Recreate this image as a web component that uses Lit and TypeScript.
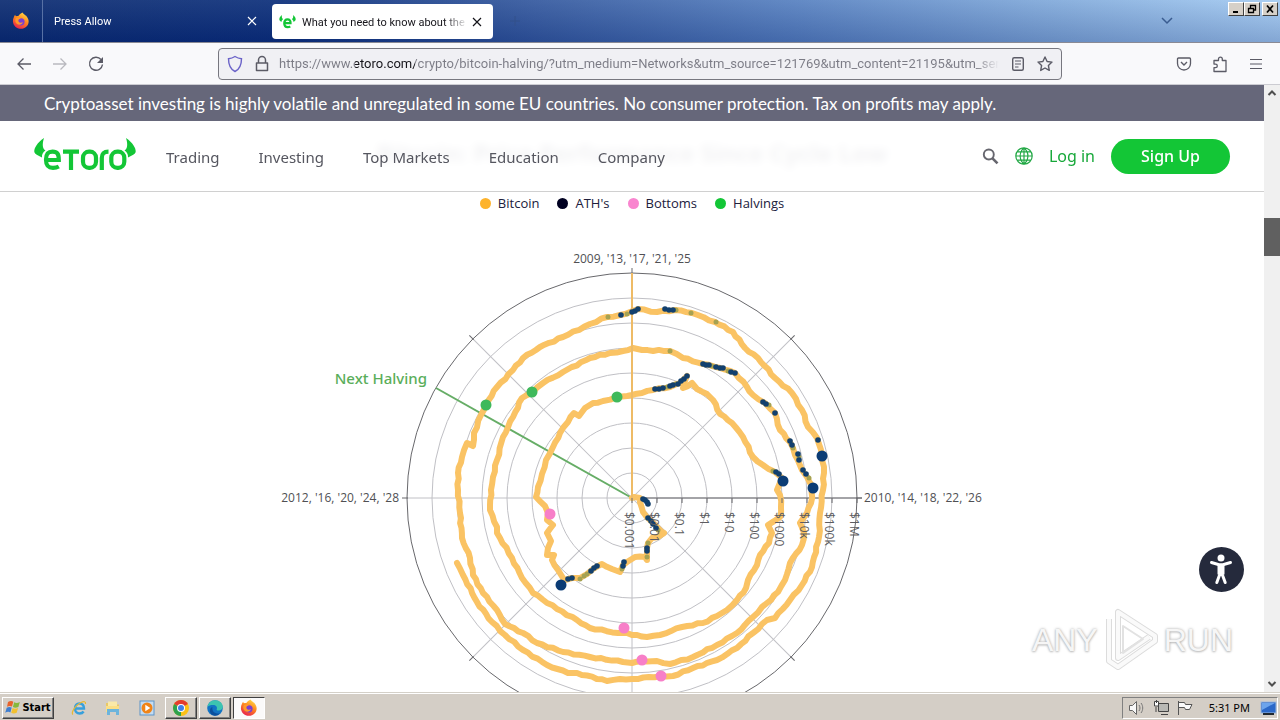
import { css, html, LitElement, svg } from 'lit';
import { customElement, property } from 'lit/decorators.js';

type Point = [number, number];

const CENTER: Point = [350, 250];
const RING_STEP = 25;
const PRICES = ['$0.001', '$0.01', '$0.1', '$1', '$10', '$100', '$1000', '$10k', '$100k', '$1M'];

// price line, from the centre outwards, one turn every four years
const PRICE_LINE = `
350,250 352,249 358,250 358,254 361,264 368,272 373,277 380,284 382,285 376,289 370,290 366,295 365,300 365,305
365,312 363,309 353,309 345,314 341,317 338,324 330,321 320,316 311,321 305,326 298,330 290,330 283,332 281,330
276,322 270,312 272,307 265,307 266,300 269,293 265,285 271,277 265,272 266,265 263,258 254,249 256,239 260,226
264,212 271,199 278,185 286,174 292,165 297,168 303,160 311,155 321,153 335,149 350,147 360,145 371,142 388,139
398,135 405,128 401,140 410,135 415,141 425,146 431,152 438,166 450,175 461,189 471,209 481,217 493,224 500,230
495,242 498,247 499,259 498,269 486,277 490,285 487,295 478,307 475,317 466,332 464,340 455,352 445,362 435,368
421,375 400,379 378,387 365,389 350,387 345,385 336,385 308,380 295,372 275,361 251,345 240,330 230,310 215,285
215,279 208,262 209,242 211,229 215,212 221,189 231,169 240,150 250,145 261,135 281,124 308,110 328,105 341,103
351,100 360,102 388,103 401,110 421,116 438,120 453,125 465,139 471,147 483,155 493,165 498,182 508,194 513,207
520,222 525,229 531,239 529,255 525,265 518,275 522,285 520,297 508,315 503,332 496,344 485,355 471,369 455,385
435,397 411,409 388,416 375,413 360,413 350,415 341,414 308,409 281,404 255,395 241,385 223,376 215,362 201,345
191,327 188,310 180,290 178,265 176,242 176,225 180,209 185,195 191,198 192,185 199,167 204,156 215,139 231,122
241,110 258,99 281,89 308,76 325,69 338,67 348,64 356,61 375,64 393,62 410,65 433,74 451,84 463,100 476,110
493,130 510,145 520,162 526,179 535,190 540,207 542,225 541,242 538,265 537,289 530,319 520,337 508,352 493,370
485,372 471,385 455,400 435,412 411,420 391,428 378,428 350,431 338,431 325,433 295,425 286,425 265,417 241,402
223,387 210,374 195,354 181,327 175,315`;

const HIGHS: Point[] = [
  [339, 67], [350, 64], [353, 63], [356, 61], [383, 61], [387, 62], [391, 62], [421, 116], [424, 117], [427, 117],
  [434, 119], [438, 120], [441, 120], [449, 124], [453, 125], [481, 154], [484, 156], [493, 165], [508, 193],
  [510, 197], [516, 206], [517, 212], [521, 222], [524, 226], [373, 141], [377, 141], [381, 140], [388, 138],
  [391, 137], [396, 136], [399, 133], [402, 131], [405, 128], [494, 224], [497, 226], [361, 251], [363, 252],
  [365, 254], [366, 256], [366, 270], [369, 273], [371, 276], [374, 280], [365, 300], [365, 303], [341, 318],
  [342, 314], [315, 318], [312, 320], [309, 323], [290, 330], [286, 331], [536, 192],
];

const MINOR_HIGHS: Point[] = [
  [326, 69], [345, 66], [394, 62], [409, 65], [434, 74], [388, 103], [430, 118], [446, 123], [487, 157], [511, 200],
  [517, 209], [527, 230], [385, 139], [394, 136], [491, 223], [376, 282], [366, 295], [365, 309], [340, 321],
  [305, 326], [302, 328], [298, 331],
];

const MARKERS = [
  { kind: 'halving', points: [[335, 149], [250, 144], [204, 157]] as Point[] },
  { kind: 'high', points: [[540, 208], [531, 240], [501, 233], [279, 337]] as Point[] },
  { kind: 'bottom', points: [[268, 266], [342, 380], [360, 412], [379, 428]] as Point[] },
];

const LEGEND = [
  { label: 'Bitcoin', kind: 'bitcoin' },
  { label: "ATH's", kind: 'ath' },
  { label: 'Bottoms', kind: 'bottoms' },
  { label: 'Halvings', kind: 'halvings' },
];

function roughen(source: string) {
  const points = source.trim().split(/\s+/).map((pair) => pair.split(',').map(Number));
  const result: string[] = [];
  points.forEach(([x, y], index) => {
    result.push(`${x},${y}`);
    const next = points[index + 1];
    if (!next) return;
    const length = Math.hypot(next[0] - x, next[1] - y);
    const steps = Math.floor(length / 5);
    for (let i = 1; i < steps; i++) {
      const t = i / steps;
      const shift = Math.sin(index * 7 + i * 4) * 0.7;
      const px = x + (next[0] - x) * t - ((next[1] - y) / length) * shift;
      const py = y + (next[1] - y) * t + ((next[0] - x) / length) * shift;
      result.push(`${px.toFixed(1)},${py.toFixed(1)}`);
    }
  });
  return result.join(' ');
}

const firefoxIcon = html`
  <svg width="18" height="18" viewBox="0 0 18 18" aria-hidden="true">
    <defs>
      <linearGradient id="fx" x1="0.8" y1="0" x2="0.3" y2="1">
        <stop offset="0" stop-color="#ffe14a" />
        <stop offset="0.45" stop-color="#ff8a1e" />
        <stop offset="1" stop-color="#e8204e" />
      </linearGradient>
    </defs>
    <path fill="url(#fx)" d="M10.500.5c1 1.400 2 2 3 3 .5-.1.800.200 1.200.900 2.500 3 2.800 7-.2 10.200-3.200 3.200-8.500 2.900-11.400-.2C.5 11.700.3 8 2 4.800c.2-.8.6-1.500 1.200-2 .1.700.4 1.200.8 1.500.8-.3 1.500-.4 2.300-.3C7.200 2.500 8.800 1.600 10.500.5z" />
    <circle cx="9" cy="9.800" r="3.600" fill="#7a3fd0" />
    <path fill="#ff9a28" d="M4 6c1.800-1 3.500-.6 4.900.6-1.800.2-2.600 1-2.500 2.300.4 1.700 2.500 2.300 4.600 1.300-.8 2.200-3.800 3.300-6.200 1.600C2.900 10.300 2.900 7.500 4 6z" />
  </svg>
`;

const closeIcon = html`
  <svg width="10" height="10" viewBox="0 0 10 10" aria-hidden="true">
    <path d="M1 1l8 8M9 1l-8 8" fill="none" stroke="currentColor" stroke-width="1.200" />
  </svg>
`;

@customElement('cycle-chart')
export class CycleChart extends LitElement {
  static styles = css`
    :host {
      display: block;
      width: 700px;
      max-width: 100%;
    }

    svg {
      display: block;
      width: 100%;
      overflow: visible;
      font-family: 'Open Sans', 'Noto Sans', sans-serif;
    }

    .ring,
    .spoke {
      fill: none;
      stroke: #c0c0c5;
      stroke-width: 1px;
    }

    .outline,
    .axis {
      fill: none;
      stroke: #68686c;
      stroke-width: 1px;
    }

    .price {
      fill: none;
      stroke: #fac364;
      stroke-width: 6px;
      stroke-linejoin: round;
      stroke-linecap: round;
    }

    .start {
      stroke: #eebb66;
      stroke-width: 2px;
    }

    .next {
      stroke: #66ad66;
      stroke-width: 2px;
    }

    .dot {
      fill: #12406e;
    }

    .dot--minor {
      fill: #a6a252;
    }

    .marker--halving {
      fill: #3fb95b;
    }

    .marker--high {
      fill: #0b3c75;
    }

    .marker--bottom {
      fill: #f77fc8;
    }

    .label {
      fill: #505054;
      font-size: 12px;
    }

    .label--price {
      fill: #5c5c60;
    }

    .label--next {
      fill: #5aae5a;
      font-family: 'Noto Sans', sans-serif;
      font-size: 15px;
      font-weight: 500;
    }
  `;

  private renderSpoke(angle: number) {
    return svg`
      <g transform="rotate(${angle} ${CENTER[0]} ${CENTER[1]})">
        <line class="spoke" x1="350" y1="250" x2="350" y2="25" />
        <line class="axis" x1="350" y1="26" x2="350" y2="20" />
      </g>
    `;
  }

  private renderPrice(label: string, index: number) {
    const x = CENTER[0] + index * RING_STEP;
    return svg`
      <line class="axis" x1=${x} y1="250" x2=${x} y2="255" />
      <text class="label label--price" transform="translate(${x - 7} 264) rotate(90)">${label}</text>
    `;
  }

  protected render() {
    return html`
      <svg viewBox="0 0 700 500" role="img" aria-label="Bitcoin price by cycle">
        ${PRICES.slice(1, -1).map((_, i) => svg`<circle class="ring" cx="350" cy="250" r=${(i + 1) * RING_STEP} />`)}
        ${[0, 45, 90, 135, 180, 225, 270, 315].map((angle) => this.renderSpoke(angle))}
        <circle class="outline" cx="350" cy="250" r="225" />
        <line class="axis" x1="350" y1="250" x2="580" y2="250" />
        <line class="next" x1="350" y1="250" x2="154" y2="140" />
        <polyline class="price" points=${roughen(PRICE_LINE)} />
        <line class="start" x1="350" y1="250" x2="350" y2="25" />
        ${MINOR_HIGHS.map(([x, y]) => svg`<circle class="dot dot--minor" cx=${x} cy=${y} r="2.500" />`)}
        ${HIGHS.map(([x, y]) => svg`<circle class="dot" cx=${x} cy=${y} r="2.800" />`)}
        ${PRICES.map((label, i) => this.renderPrice(label, i))}
        ${MARKERS.map(({ kind, points }) =>
          points.map(([x, y]) => svg`<circle class="marker--${kind}" cx=${x} cy=${y} r="5.500" />`)
        )}
        <text class="label" x="350" y="15" text-anchor="middle">2009, '13, '17, '21, '25</text>
        <text class="label" x="117" y="254" text-anchor="end">2012, '16, '20, '24, '28</text>
        <text class="label" x="582" y="254">2010, '14, '18, '22, '26</text>
        <text class="label label--next" x="145" y="136" text-anchor="end">Next Halving</text>
      </svg>
    `;
  }
}

@customElement('browser-tab')
export class BrowserTab extends LitElement {
  static styles = css`
    :host {
      display: flex;
      align-items: center;
      box-sizing: border-box;
      width: 225px;
      padding: 0 7px 0 11px;
      color: #fff;
      font-family: Roboto, 'Noto Sans', sans-serif;
    }

    :host([active]) {
      width: 221px;
      margin: 4px 0 3px 4px;
      padding: 0 7px;
      border-radius: 4px;
      background: #fff;
      color: #15141a;
    }

    button {
      padding: 0;
      border: 0;
      background: none;
      color: inherit;
      font: inherit;
      font-size: 11px;
      line-height: 16px;
    }

    .title {
      flex: 1;
      min-width: 0;
      overflow: hidden;
      padding-top: 2px;
      text-align: left;
      white-space: nowrap;
      -webkit-mask-image: linear-gradient(to left, transparent, #000 24px);
    }

    .close {
      display: flex;
      padding: 4px;
    }

    .icon {
      display: flex;
      margin-right: 6px;
    }
  `;

  @property()
  public name: string = '';

  @property({ type: Boolean, reflect: true })
  public active: boolean = false;

  protected render() {
    return html`
      ${this.active
        ? html`
            <span class="icon">
              <svg width="17" height="16" viewBox="0 0 17 16" aria-hidden="true">
                <path fill="#13c636" d="M3 1C.8 2.400-.3 5 .7 6.600c.5.700 1 1 1.700 1.400C2.600 6 4 5.500 4 5 2.800 4.300 2.600 2.600 3 1zM14 1c2.200 1.400 3.300 4 2.300 5.600-.5.700-1 1-1.700 1.400C14.400 6 13 5.500 13 5c1.200-.7 1.400-2.400 1-4z" />
                <path fill="none" stroke="#13c636" stroke-width="2.300" d="M5.300 9.200h6.200c.2-2.400-1-3.800-3-3.800-2.100 0-3.200 1.500-3.200 3.900 0 2.600 1.200 3.900 3.300 3.900 1.200 0 2-.3 2.600-.8" />
              </svg>
            </span>
          `
        : ''}
      <button class="title">${this.name}</button>
      <button class="close" aria-label="Close tab">${closeIcon}</button>
    `;
  }
}

@customElement('app-root')
export default class AppRoot extends LitElement {
  static styles = css`
    :host {
      display: flex;
      flex-direction: column;
      height: 100vh;
      overflow: hidden;
      background: #fff;
      font-family: 'Noto Sans', sans-serif;
    }

    button {
      padding: 0;
      border: 0;
      background: none;
      color: inherit;
      font: inherit;
    }

    a {
      color: inherit;
      text-decoration: none;
    }

    svg {
      display: block;
      flex: none;
    }

    .tabs {
      display: flex;
      flex: none;
      height: 43px;
      background:
        linear-gradient(to bottom, rgba(255, 255, 255, 0.08), rgba(0, 20, 90, 0.2)),
        linear-gradient(to right, #0a2a70, #0b2e7a 22%, #34599f 42%, #5680c0 62%, #80a9da 82%, #a4cbf2);
      border-bottom: 1px solid #8a8a94;
      box-sizing: border-box;
    }

    .tabs__view {
      display: flex;
      align-items: center;
      padding: 0 12px;
      border-right: 1px solid #5871a5;
    }

    .tabs__new {
      display: flex;
      align-items: center;
      margin-left: 16px;
      color: #33518a;
    }

    .tabs__list {
      margin-left: auto;
      padding: 0 54px;
      color: #3a5c90;
    }

    .window {
      display: flex;
      align-self: flex-start;
      padding: 2px 2px 0 0;
    }

    .window__button {
      display: flex;
      align-items: center;
      justify-content: center;
      width: 16px;
      height: 14px;
      box-sizing: border-box;
      background: #d6d0c8;
      border: 1px solid;
      border-color: #fff #404040 #404040 #fff;
      color: #000;
    }

    .window__button:last-child {
      margin-left: 2px;
    }

    .toolbar {
      display: flex;
      align-items: center;
      flex: none;
      height: 42px;
      box-sizing: border-box;
      padding: 0 16px;
      border-bottom: 1px solid #ccccd2;
      background: #f9f9fb;
      color: #5b5b66;
    }

    .toolbar__nav,
    .toolbar__menu {
      display: flex;
      align-items: center;
      flex: 1;
      gap: 20px;
    }

    .toolbar__nav button:nth-child(2) {
      opacity: 0.4;
    }

    .toolbar__menu {
      justify-content: flex-end;
    }

    .address {
      display: flex;
      align-items: center;
      flex: 0 1 844px;
      gap: 12px;
      box-sizing: border-box;
      height: 32px;
      padding: 0 8px;
      border: 1px solid #77777f;
      border-radius: 4px;
      background: #f0f0f4;
    }

    .address__input {
      flex: 1;
      min-width: 0;
      margin-left: -2px;
      padding: 0;
      border: 0;
      outline: none;
      background: linear-gradient(
        to right,
        #7b7b85 76px,
        #15141a 76px,
        #15141a 136px,
        #7b7b85 136px,
        #7b7b85 calc(100% - 24px),
        transparent
      );
      -webkit-background-clip: text;
      background-clip: text;
      color: transparent;
      font-family: Roboto, 'Noto Sans', sans-serif;
      font-size: 13px;
      line-height: 20px;
    }

    .content {
      display: flex;
      flex: 1;
      min-height: 0;
    }

    .page {
      position: relative;
      flex: 1;
      min-width: 0;
      overflow: hidden;
      background: #fff;
    }

    .page__top {
      position: absolute;
      top: 0;
      left: 0;
      right: 0;
    }

    .risk {
      margin: 0;
      padding: 2px 44px 0;
      background: #66677a;
      color: #fff;
      font-family: Lato, sans-serif;
      font-size: 17px;
      line-height: 34px;
      white-space: nowrap;
    }

    .header {
      display: flex;
      align-items: center;
      height: 70px;
      padding: 0 34px;
      border-bottom: 1px solid #d0d0d0;
      background: rgba(255, 255, 255, 0.95);
      backdrop-filter: blur(4px);
    }

    .header__links {
      display: flex;
      flex: 1;
      gap: 39px;
      margin-left: 30px;
      padding-top: 2px;
      color: #55565f;
      font-size: 15px;
      line-height: 20px;
    }

    .header__actions {
      display: flex;
      align-items: center;
      gap: 16px;
      color: #17a83a;
      font-size: 16px;
      line-height: 20px;
    }

    .header__signup {
      width: 119px;
      height: 35px;
      border-radius: 18px;
      background: #13c636;
      color: #fff;
      font-weight: 500;
    }

    .article {
      display: flex;
      flex-direction: column;
      align-items: center;
      padding-top: 52px;
    }

    .article__title {
      margin: 0;
      color: #000021;
      font-size: 24px;
      font-weight: 700;
      line-height: 32px;
    }

    .legend {
      display: flex;
      gap: 18px;
      margin: 24px 0 35px;
      padding: 0;
      list-style: none;
      color: #20203c;
      font-family: 'Open Sans', sans-serif;
      font-size: 13px;
      line-height: 20px;
    }

    .legend__item {
      display: flex;
      align-items: center;
      gap: 7px;
    }

    .legend__item::before {
      content: '';
      width: 11px;
      height: 11px;
      border-radius: 50%;
      background: var(--dot);
    }

    .legend__item--bitcoin {
      --dot: #fdb32c;
    }

    .legend__item--ath {
      --dot: #000021;
    }

    .legend__item--bottoms {
      --dot: #f985cf;
    }

    .legend__item--halvings {
      --dot: #13c636;
    }

    .access {
      position: absolute;
      right: 20px;
      bottom: 100px;
      border-radius: 50%;
    }

    .watermark {
      position: absolute;
      right: 31px;
      bottom: 16px;
      display: flex;
      align-items: center;
      gap: 4px;
      color: #f6f6f6;
      font-family: 'Liberation Sans Narrow', 'Liberation Sans', sans-serif;
      font-size: 32px;
      line-height: 72px;
      text-shadow: 0 0 3px #a8a8a8, 0 1px 2px #cfcfcf;
    }

    .scrollbar {
      display: flex;
      flex-direction: column;
      align-items: center;
      width: 16px;
      background: #f0f0f0;
      color: #505050;
    }

    .scrollbar__button {
      display: flex;
      align-items: center;
      justify-content: center;
      height: 16px;
    }

    .scrollbar__track {
      display: flex;
      flex-direction: column;
      flex: 1;
      align-self: stretch;
    }

    .scrollbar__track::before {
      content: '';
      flex: 117 0 0;
    }

    .scrollbar__track::after {
      content: '';
      flex: 420 0 0;
    }

    .scrollbar__thumb {
      height: 38px;
      background: #606060;
    }

    .taskbar {
      display: flex;
      align-items: center;
      flex: none;
      height: 28px;
      box-sizing: border-box;
      padding: 3px 2px 1px;
      border-top: 1px solid #d4d0c8;
      box-shadow: inset 0 1px #fff;
      background: #d4cec6;
      color: #000;
      font-size: 11px;
    }

    .taskbar__start,
    .taskbar__app {
      display: flex;
      align-items: center;
      justify-content: center;
      box-sizing: border-box;
      height: 22px;
      border: 1px solid;
      border-color: #fff #404040 #404040 #fff;
      box-shadow: inset -1px -1px #808080;
    }

    .taskbar__start {
      gap: 1px;
      width: 52px;
      font-family: 'DejaVu Sans Condensed', 'DejaVu Sans', sans-serif;
      font-weight: 700;
    }

    .taskbar__quick {
      display: flex;
      gap: 18px;
      padding: 0 10px 0 17px;
    }

    .taskbar__app {
      width: 32px;
      margin-right: 2px;
    }

    .taskbar__app--active {
      border-color: #404040 #fff #fff #404040;
      box-shadow: none;
      background: #fbfafa;
    }

    .tray {
      display: flex;
      align-items: center;
      gap: 7px;
      height: 22px;
      margin-left: auto;
      padding: 0 0 0 5px;
      border: 1px solid;
      border-color: #808080 #fff #fff #808080;
      box-sizing: border-box;
    }

    .tray__time {
      margin: 0 3px 0 9px;
    }
  `;

  private renderTabs() {
    return html`
      <div class="tabs">
        <button class="tabs__view" aria-label="Firefox">${firefoxIcon}</button>
        <browser-tab name="Press Allow"></browser-tab>
        <browser-tab name="What you need to know about the" active></browser-tab>
        <button class="tabs__new" aria-label="New tab">
          <svg width="12" height="12" viewBox="0 0 12 12"><path d="M6 1v10M1 6h10" stroke="currentColor" /></svg>
        </button>
        <button class="tabs__list" aria-label="List all tabs">
          <svg width="14" height="14" viewBox="0 0 14 14"><path d="M2 4l5 5 5-5" fill="none" stroke="currentColor" stroke-width="1.500" /></svg>
        </button>
        <div class="window">
          <button class="window__button" aria-label="Minimize">
            <svg width="10" height="10" viewBox="0 0 10 10"><path d="M2 8h5" stroke="currentColor" stroke-width="2" /></svg>
          </button>
          <button class="window__button" aria-label="Restore">
            <svg width="10" height="10" viewBox="0 0 10 10"><path d="M3.500 4V1.500h5V6H6.500M3 1.500h6M1.500 4.500h5v4h-5zM1 4.500h6" fill="none" stroke="currentColor" stroke-width="1.300" /></svg>
          </button>
          <button class="window__button" aria-label="Close">
            <svg width="10" height="10" viewBox="0 0 10 10"><path d="M2 1.500l6 7M8 1.500l-6 7" stroke="currentColor" stroke-width="1.700" /></svg>
          </button>
        </div>
      </div>
    `;
  }

  private renderToolbar() {
    return html`
      <div class="toolbar">
        <div class="toolbar__nav">
          <button aria-label="Back">
            <svg width="16" height="16" viewBox="0 0 16 16"><path d="M15 8H2M7.500 2.500L2 8l5.500 5.500" fill="none" stroke="currentColor" stroke-width="1.300" /></svg>
          </button>
          <button aria-label="Forward">
            <svg width="16" height="16" viewBox="0 0 16 16"><path d="M1 8h13M8.500 2.500L14 8l-5.500 5.500" fill="none" stroke="currentColor" stroke-width="1.300" /></svg>
          </button>
          <button aria-label="Reload">
            <svg width="16" height="16" viewBox="0 0 16 16"><path d="M13 3.500A6.500 6.500 0 1 0 14.500 8.500" fill="none" stroke="currentColor" stroke-width="1.400" /><path d="M15 1v6H9z" fill="currentColor" /></svg>
          </button>
        </div>
        <div class="address">
          <svg width="16" height="18" viewBox="0 0 16 18"><path d="M8 1.500c2.200 1.400 4.300 2 6.500 2.200 0 5.800-1.500 10.300-6.500 12.800C3 14 1.500 9.500 1.500 3.700 3.700 3.500 5.800 2.900 8 1.500z" fill="none" stroke="#6a62c8" stroke-width="1.400" /></svg>
          <svg width="14" height="18" viewBox="0 0 14 18"><path d="M3.500 8V5a3.500 3.500 0 0 1 7 0v3M1.500 8h11v7.500h-11z" fill="none" stroke="currentColor" stroke-width="1.500" stroke-linejoin="round" /></svg>
          <input
            class="address__input"
            aria-label="Address"
            value="https://www.etoro.com/crypto/bitcoin-halving/?utm_medium=Networks&utm_source=121769&utm_content=21195&utm_serial=210"
          />
          <svg width="14" height="16" viewBox="0 0 14 16"><rect x="1.700" y="1.700" width="10.600" height="12.600" rx="1.500" fill="none" stroke="currentColor" stroke-width="1.400" /><path d="M4 5h6M4 8h6M4 11h3.500" stroke="currentColor" stroke-width="1.200" /></svg>
          <svg width="16" height="16" viewBox="0 0 16 16"><path d="M8 1l2.100 4.500 4.900.6-3.600 3.400.9 4.900L8 12l-4.300 2.400.9-4.900L1 6.100l4.900-.6z" fill="none" stroke="currentColor" stroke-width="1.400" stroke-linejoin="round" /></svg>
        </div>
        <div class="toolbar__menu">
          <button aria-label="Save to Pocket">
            <svg width="16" height="16" viewBox="0 0 16 16"><path d="M2.500 2h11a1 1 0 0 1 1 1v4.500a6.500 6.500 0 0 1-13 0V3a1 1 0 0 1 1-1z" fill="none" stroke="currentColor" stroke-width="1.300" /><path d="M5 6l3 3 3-3" fill="none" stroke="currentColor" stroke-width="1.400" /></svg>
          </button>
          <button aria-label="Extensions">
            <svg width="16" height="18" viewBox="0 0 16 18"><path d="M2 5.500h4.500V4a1.900 1.900 0 0 1 3.800 0v1.500H14v11H2v-3.800h1.500a1.800 1.800 0 0 0 0-3.600H2z" fill="none" stroke="currentColor" stroke-width="1.300" stroke-linejoin="round" /></svg>
          </button>
          <button aria-label="Menu">
            <svg width="16" height="16" viewBox="0 0 16 16"><path d="M2 3.500h12M2 8h12M2 12.500h12" stroke="currentColor" stroke-width="1.200" /></svg>
          </button>
        </div>
      </div>
    `;
  }

  private renderHeader() {
    return html`
      <div class="page__top">
        <p class="risk">
          Cryptoasset investing is highly volatile and unregulated in some EU countries. No consumer protection. Tax on
          profits may apply.
        </p>
        <header class="header">
          <a href="#" aria-label="eToro">
            <svg width="102" height="36" viewBox="0 0 102 36">
              <path fill="#13c636" d="M10 0C3 5 0 10 .3 14c.5 2 3.500 3.500 7.700 5.500-.3-3 1-5.500 3.500-7C8.500 11 8 6 10 0zM92 0c7 5 10 10 9.700 14-.5 2-3.500 3.500-7.700 5.500.3-3-1-5.500-3.500-7C93.500 11 94 6 92 0z" />
              <g fill="none" stroke="#13c636" stroke-width="4.200">
                <path d="M12.500 22h12.300c0-6-1.500-8.300-6.300-8.300-5.200 0-6.500 3-6.500 8.100 0 5.300 1.700 8 7 8 2.600 0 4.300-.5 5.800-1.300M29 13.700h16M37 13.700V32" />
                <rect x="49" y="13.700" width="13" height="16.100" rx="6" />
                <path d="M67.800 32V20c0-4.500 2-6.300 6.700-6.300" />
                <rect x="77.300" y="13.700" width="13" height="16.100" rx="6" />
              </g>
            </svg>
          </a>
          <nav class="header__links">
            ${['Trading', 'Investing', 'Top Markets', 'Education', 'Company'].map(
              (label) => html`<a href="#">${label}</a>`
            )}
          </nav>
          <div class="header__actions">
            <button aria-label="Search">
              <svg width="17" height="17" viewBox="0 0 17 17"><circle cx="6.800" cy="6.500" r="5" fill="none" stroke="#66666e" stroke-width="1.900" /><path d="M10.500 10.300l5 5" stroke="#66666e" stroke-width="2.600" /></svg>
            </button>
            <button aria-label="Language">
              <svg width="18" height="18" viewBox="0 0 18 18"><path d="M9 .8a8.200 8.200 0 1 0 0 16.400A8.200 8.200 0 1 0 9 .8zM9 1v16M1 9h16M2.300 4.800h13.400M2.300 13.200h13.400M9 .8C3.800 5.500 3.800 12.500 9 17.200 14.200 12.500 14.200 5.500 9 .8z" fill="none" stroke="#22a845" stroke-width="1.200" /></svg>
            </button>
            <a href="#">Log in</a>
            <button class="header__signup">Sign Up</button>
          </div>
        </header>
      </div>
    `;
  }

  private renderTaskbar() {
    return html`
      <div class="taskbar">
        <button class="taskbar__start">
          <svg width="16" height="15" viewBox="0 0 16 15"><path fill="#e8632c" d="M3 2c2-1.300 4-1.300 5.300-.3L7 6.600C5.500 5.700 3.700 5.800 2 6.800z" /><path fill="#86b83c" d="M9.200 2.200c1.500 1 3.300 1 5.600-.1l-1.400 4.800c-2 1-3.800 1-5.500.1z" /><path fill="#3f7ed0" d="M1.700 7.700c1.800-1 3.500-1 5-.1l-1.300 4.800C4 11.500 2 11.600.2 12.700z" /><path fill="#f2c030" d="M7.600 8c1.700 1 3.500.9 5.500-.1l-1.400 4.900c-2 1-3.800 1-5.500 0z" /></svg>
          Start
        </button>
        <div class="taskbar__quick">
          <button aria-label="Internet Explorer">
            <svg width="16" height="16" viewBox="0 0 16 16"><path d="M4 8.500h9c0-3-1.500-5-4.500-5S4 5.500 4 8.500s2 5 4.600 5c2 0 3.200-.7 4-2" fill="none" stroke="#38a0dc" stroke-width="2.400" /><path d="M2 14.500C-.5 13 4 5.500 10 2.500c3-1.500 5-1 4.500 1.500" fill="none" stroke="#e8b830" stroke-width="1.200" /></svg>
          </button>
          <button aria-label="Explorer">
            <svg width="16" height="16" viewBox="0 0 16 16"><path fill="#e8c868" d="M1 3h5l1 1.500h7V12H1z" /><path fill="#fae9a8" d="M3 1.500h9v7H3z" /><path fill="#fbdf86" d="M1 6h13v6H1z" /><path fill="#6cb4dc" d="M2 9h12v6h-3v-3H5v3H2z" /></svg>
          </button>
          <button aria-label="Media Player">
            <svg width="16" height="16" viewBox="0 0 16 16"><rect x="1" y="1" width="14" height="14" fill="#c4dcf2" stroke="#5c94c8" /><circle cx="8" cy="8" r="5.500" fill="#f08418" /><path fill="#fff" d="M6.300 4.800v6.400L11.300 8z" /></svg>
          </button>
        </div>
        <button class="taskbar__app" aria-label="Chrome">
          <svg width="16" height="16" viewBox="0 0 16 16"><circle cx="8" cy="8" r="8" fill="#fbc116" /><path fill="#e33b2e" d="M8 8L1.100 4A8 8 0 0 1 14.900 4z" /><path fill="#2da14c" d="M8 8v8A8 8 0 0 1 1.100 4z" /><circle cx="8" cy="8" r="4" fill="#fff" /><circle cx="8" cy="8" r="3" fill="#3f7fe8" /></svg>
        </button>
        <button class="taskbar__app" aria-label="Edge">
          <svg width="16" height="16" viewBox="0 0 16 16"><circle cx="8" cy="8" r="7.800" fill="#1273c4" /><path fill="#3cc4b0" d="M.5 7C1 3 4 .2 8 .2c4.500 0 8 3.300 7.800 6.800-.2 2.200-2 3.500-4.500 3.400-1.500 0-2-.7-1.500-1.500C10.500 7 9 5 6 5 3.500 5 1.500 5.500.5 7z" /><path fill="#0c4f9c" d="M5.500 7c-1 4 2 7 7.500 6.500-4.500 4-9.500 2-10-2C2.700 9.500 3.500 7.700 5.500 7z" /></svg>
        </button>
        <button class="taskbar__app taskbar__app--active" aria-label="Firefox">${firefoxIcon}</button>
        <div class="tray">
          <svg width="18" height="16" viewBox="0 0 18 16"><path d="M1.500 5.500h3l4-4v13l-4-4h-3z" fill="#f8f8f8" stroke="#666" /><path d="M11 5c1.300 2 1.300 4 0 6M13 3c2.300 3 2.300 7 0 10" fill="none" stroke="#777" /></svg>
          <svg width="16" height="16" viewBox="0 0 16 16"><path d="M5.500 3.500h10v8h-10z" fill="#b8b8b4" stroke="#444" /><path d="M8 14.500h7M3 7v5M1.500 1.500h4V6h-4zM3.500 0v3" fill="#fff" stroke="#444" /></svg>
          <svg width="17" height="16" viewBox="0 0 17 16"><path d="M2.500 1v14M2.500 2.500h6l1 2h6.500l-2.500 5h-4l-1-2h-6" fill="#fafafa" stroke="#555" /></svg>
          <span class="tray__time">5:31 PM</span>
          <svg width="17" height="16" viewBox="0 0 17 16"><rect x="1" y="2" width="15" height="11" fill="#2b68c8" stroke="#9db8dc" /><path fill="#6ca4ec" d="M2 3h13l-13 7z" /><path fill="#202830" d="M3 13h11v2H3z" /></svg>
        </div>
      </div>
    `;
  }

  protected render() {
    return html`
      ${this.renderTabs()} ${this.renderToolbar()}
      <div class="content">
        <div class="page">
          <main class="article">
            <h2 class="article__title">Bitcoin: Price Performance Since Cycle Low</h2>
            <ul class="legend">
              ${LEGEND.map(({ label, kind }) => html`<li class="legend__item legend__item--${kind}">${label}</li>`)}
            </ul>
            <cycle-chart></cycle-chart>
          </main>
          ${this.renderHeader()}
          <button class="access" aria-label="Accessibility">
            <svg width="45" height="45" viewBox="0 0 45 45"><circle cx="22.500" cy="22.500" r="22.500" fill="#252a3c" /><circle cx="22" cy="11" r="3.500" fill="#fff" /><path d="M12.500 15.500l7.500 2.300h4l7.500-2.300M22 18.500v8M21.300 26l-3.500 9.500M22.700 26l3.500 9.500" fill="none" stroke="#fff" stroke-width="3" stroke-linecap="round" /><path fill="#fff" d="M18.500 17h7v10.500h-7z" /></svg>
          </button>
          <div class="watermark">
            <span>ANY</span>
            <svg width="58" height="66" viewBox="0 0 58 66">
              <g fill="none" stroke-linejoin="round">
                <path stroke="#dcdcdc" stroke-width="6" d="M7 12v42l9 6 37-26v-5L16 5v46l31-21" />
                <path stroke="#fafafa" stroke-width="4" d="M7 12v42l9 6 37-26v-5L16 5v46l31-21" />
                <path stroke="#e2e2e2" stroke-width="2" d="M21 19v27l20-14z" />
              </g>
            </svg>
            <span>RUN</span>
          </div>
        </div>
        <div class="scrollbar">
          <button class="scrollbar__button" aria-label="Scroll up">
            <svg width="10" height="10" viewBox="0 0 10 10"><path d="M1.500 7L5 3.500 8.500 7" fill="none" stroke="currentColor" stroke-width="2" /></svg>
          </button>
          <div class="scrollbar__track"><div class="scrollbar__thumb"></div></div>
          <button class="scrollbar__button" aria-label="Scroll down">
            <svg width="10" height="10" viewBox="0 0 10 10"><path d="M1.500 3L5 6.500 8.500 3" fill="none" stroke="currentColor" stroke-width="2" /></svg>
          </button>
        </div>
      </div>
      ${this.renderTaskbar()}
    `;
  }
}
